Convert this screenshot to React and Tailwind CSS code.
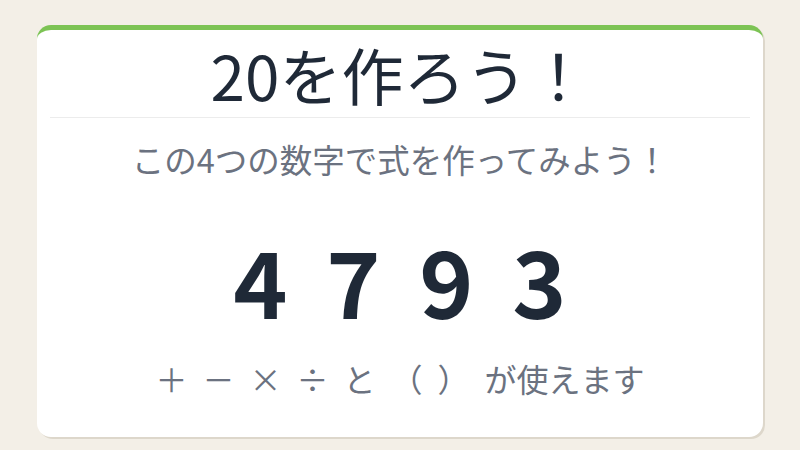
export default function App() {
  const numbers = [4, 7, 9, 3];
  const operators = ["＋", "－", "×", "÷", "と", "（", "）"];
  const font = { fontFamily: '"Noto Sans CJK JP", "Noto Sans", sans-serif' };
  return (
    <div className="w-[800px] h-[450px] bg-[#f3efe7] pt-[25px]" style={font}>
      <div className="mx-auto w-[726px] h-[412px] bg-white rounded-[14px] border-t-[5px] border-[#7cc354] shadow-[2px_2px_0_#ddd7cb] flex flex-col">
        <div className="mx-[13px] border-b border-[#ececec] h-[88px] pt-[13px] flex justify-center">
          <h1 className="text-[62px] leading-none text-[#1f2937]">20を作ろう！</h1>
        </div>
        <p className="mt-[25px] text-center text-[32.5px] leading-none text-[#6b7280]">
          この4つの数字で式を作ってみよう！
        </p>
        <div className="mt-[57px] flex justify-center text-[92px] font-bold leading-none text-[#1f2937]">
          {numbers.map((n, i) => (
            <span key={i} className="w-[93px] text-center">{n}</span>
          ))}
        </div>
        <div className="mt-[37px] flex justify-center gap-[15px] text-[32px] leading-none text-[#6b7280]">
          {operators.map((op, i) => (
            <span key={i} className="w-[32px] text-center">{op}</span>
          ))}
          <span>が使えます</span>
        </div>
      </div>
    </div>
  );
}
